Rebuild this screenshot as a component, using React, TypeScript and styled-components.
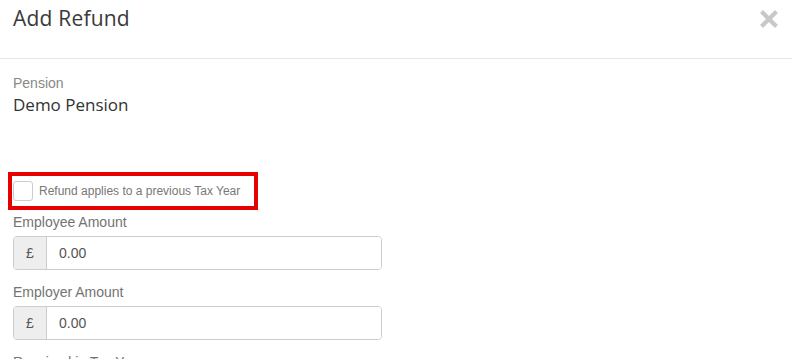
import styled, { createGlobalStyle } from "styled-components";

const GlobalStyle = createGlobalStyle`
	html, body {
		margin: 0;
		padding: 0;
		background: #ffffff;
		overflow: hidden;
	}
	* {
		box-sizing: border-box;
	}
`;

const Modal = styled.div`
	width: 792px;
	height: 359px;
	overflow: hidden;
	background: #ffffff;
	font-family: "Liberation Sans", Arial, sans-serif;
`;

const Header = styled.div`
	height: 59px;
	border-bottom: 1px solid #e5e5e5;
	padding: 4px 13px 0 13px;
	display: flex;
	justify-content: space-between;
	align-items: flex-start;
`;

const Title = styled.h4`
	margin: 0;
	font-family: "Open Sans", sans-serif;
	font-weight: 400;
	font-size: 21px;
	letter-spacing: 0.2px;
	line-height: 28px;
	color: #3a3a3a;
`;

const Close = styled.button`
	border: none;
	background: none;
	padding: 0;
	margin: 6px 1px 0 0;
	width: 18px;
	height: 18px;
	cursor: pointer;
	display: flex;
`;

const Body = styled.div`
	padding: 14px 13px 0 13px;
	display: flex;
	flex-direction: column;
`;

const Label = styled.div<{ $muted?: boolean }>`
	font-size: 14px;
	line-height: 20px;
	color: ${(p) => (p.$muted ? "#888888" : "#737373")};
	margin-bottom: 4px;
`;

const Value = styled.div`
	font-family: "Open Sans", sans-serif;
	font-size: 17px;
	line-height: 22px;
	color: #333333;
	margin-top: -3px;
	margin-bottom: 56px;
`;

const Highlight = styled.div`
	margin-left: -5px;
	width: 250px;
	height: 38px;
	border: 4px solid #e60000;
	display: flex;
	align-items: center;
	gap: 6px;
	padding-left: 1px;
	margin-bottom: 2px;
`;

const Check = styled.span`
	width: 20px;
	height: 20px;
	border: 1px solid #cccccc;
	border-radius: 3px;
	background: #ffffff;
`;

const CheckText = styled.span`
	font-size: 12px;
	color: #777777;
`;

const Field = styled.div`
	display: flex;
	flex-direction: column;
	margin-bottom: 12px;
`;

const InputGroup = styled.div`
	display: flex;
	width: 369px;
	height: 34px;
	border: 1px solid #cccccc;
	border-radius: 4px;
	overflow: hidden;
`;

const Addon = styled.span`
	width: 33px;
	background: #eeeeee;
	border-right: 1px solid #cccccc;
	color: #555555;
	font-size: 14px;
	display: flex;
	align-items: center;
	justify-content: center;
`;

const Input = styled.input`
	flex: 1;
	border: none;
	outline: none;
	padding: 0 12px;
	font-family: "Liberation Sans", Arial, sans-serif;
	font-size: 14px;
	color: #555555;
`;

function Amount({ label }: { label: string }) {
	return (
		<Field>
			<Label>{label}</Label>
			<InputGroup>
				<Addon>£</Addon>
				<Input defaultValue="0.00" />
			</InputGroup>
		</Field>
	);
}

export default function App() {
	return (
		<>
			<GlobalStyle />
			<Modal>
				<Header>
					<Title>Add Refund</Title>
					<Close aria-label="Close">
						<svg width="18" height="18" viewBox="0 0 18 18">
							<path
								d="M3 3 L15 15 M15 3 L3 15"
								stroke="#c8c8c8"
								strokeWidth="4.2"
								strokeLinecap="square"
							/>
						</svg>
					</Close>
				</Header>
				<Body>
					<Label $muted>Pension</Label>
					<Value>Demo Pension</Value>
					<Highlight>
						<Check />
						<CheckText>Refund applies to a previous Tax Year</CheckText>
					</Highlight>
					<Amount label="Employee Amount" />
					<Amount label="Employer Amount" />
					<Label>Received in Tax Year</Label>
				</Body>
			</Modal>
		</>
	);
}
